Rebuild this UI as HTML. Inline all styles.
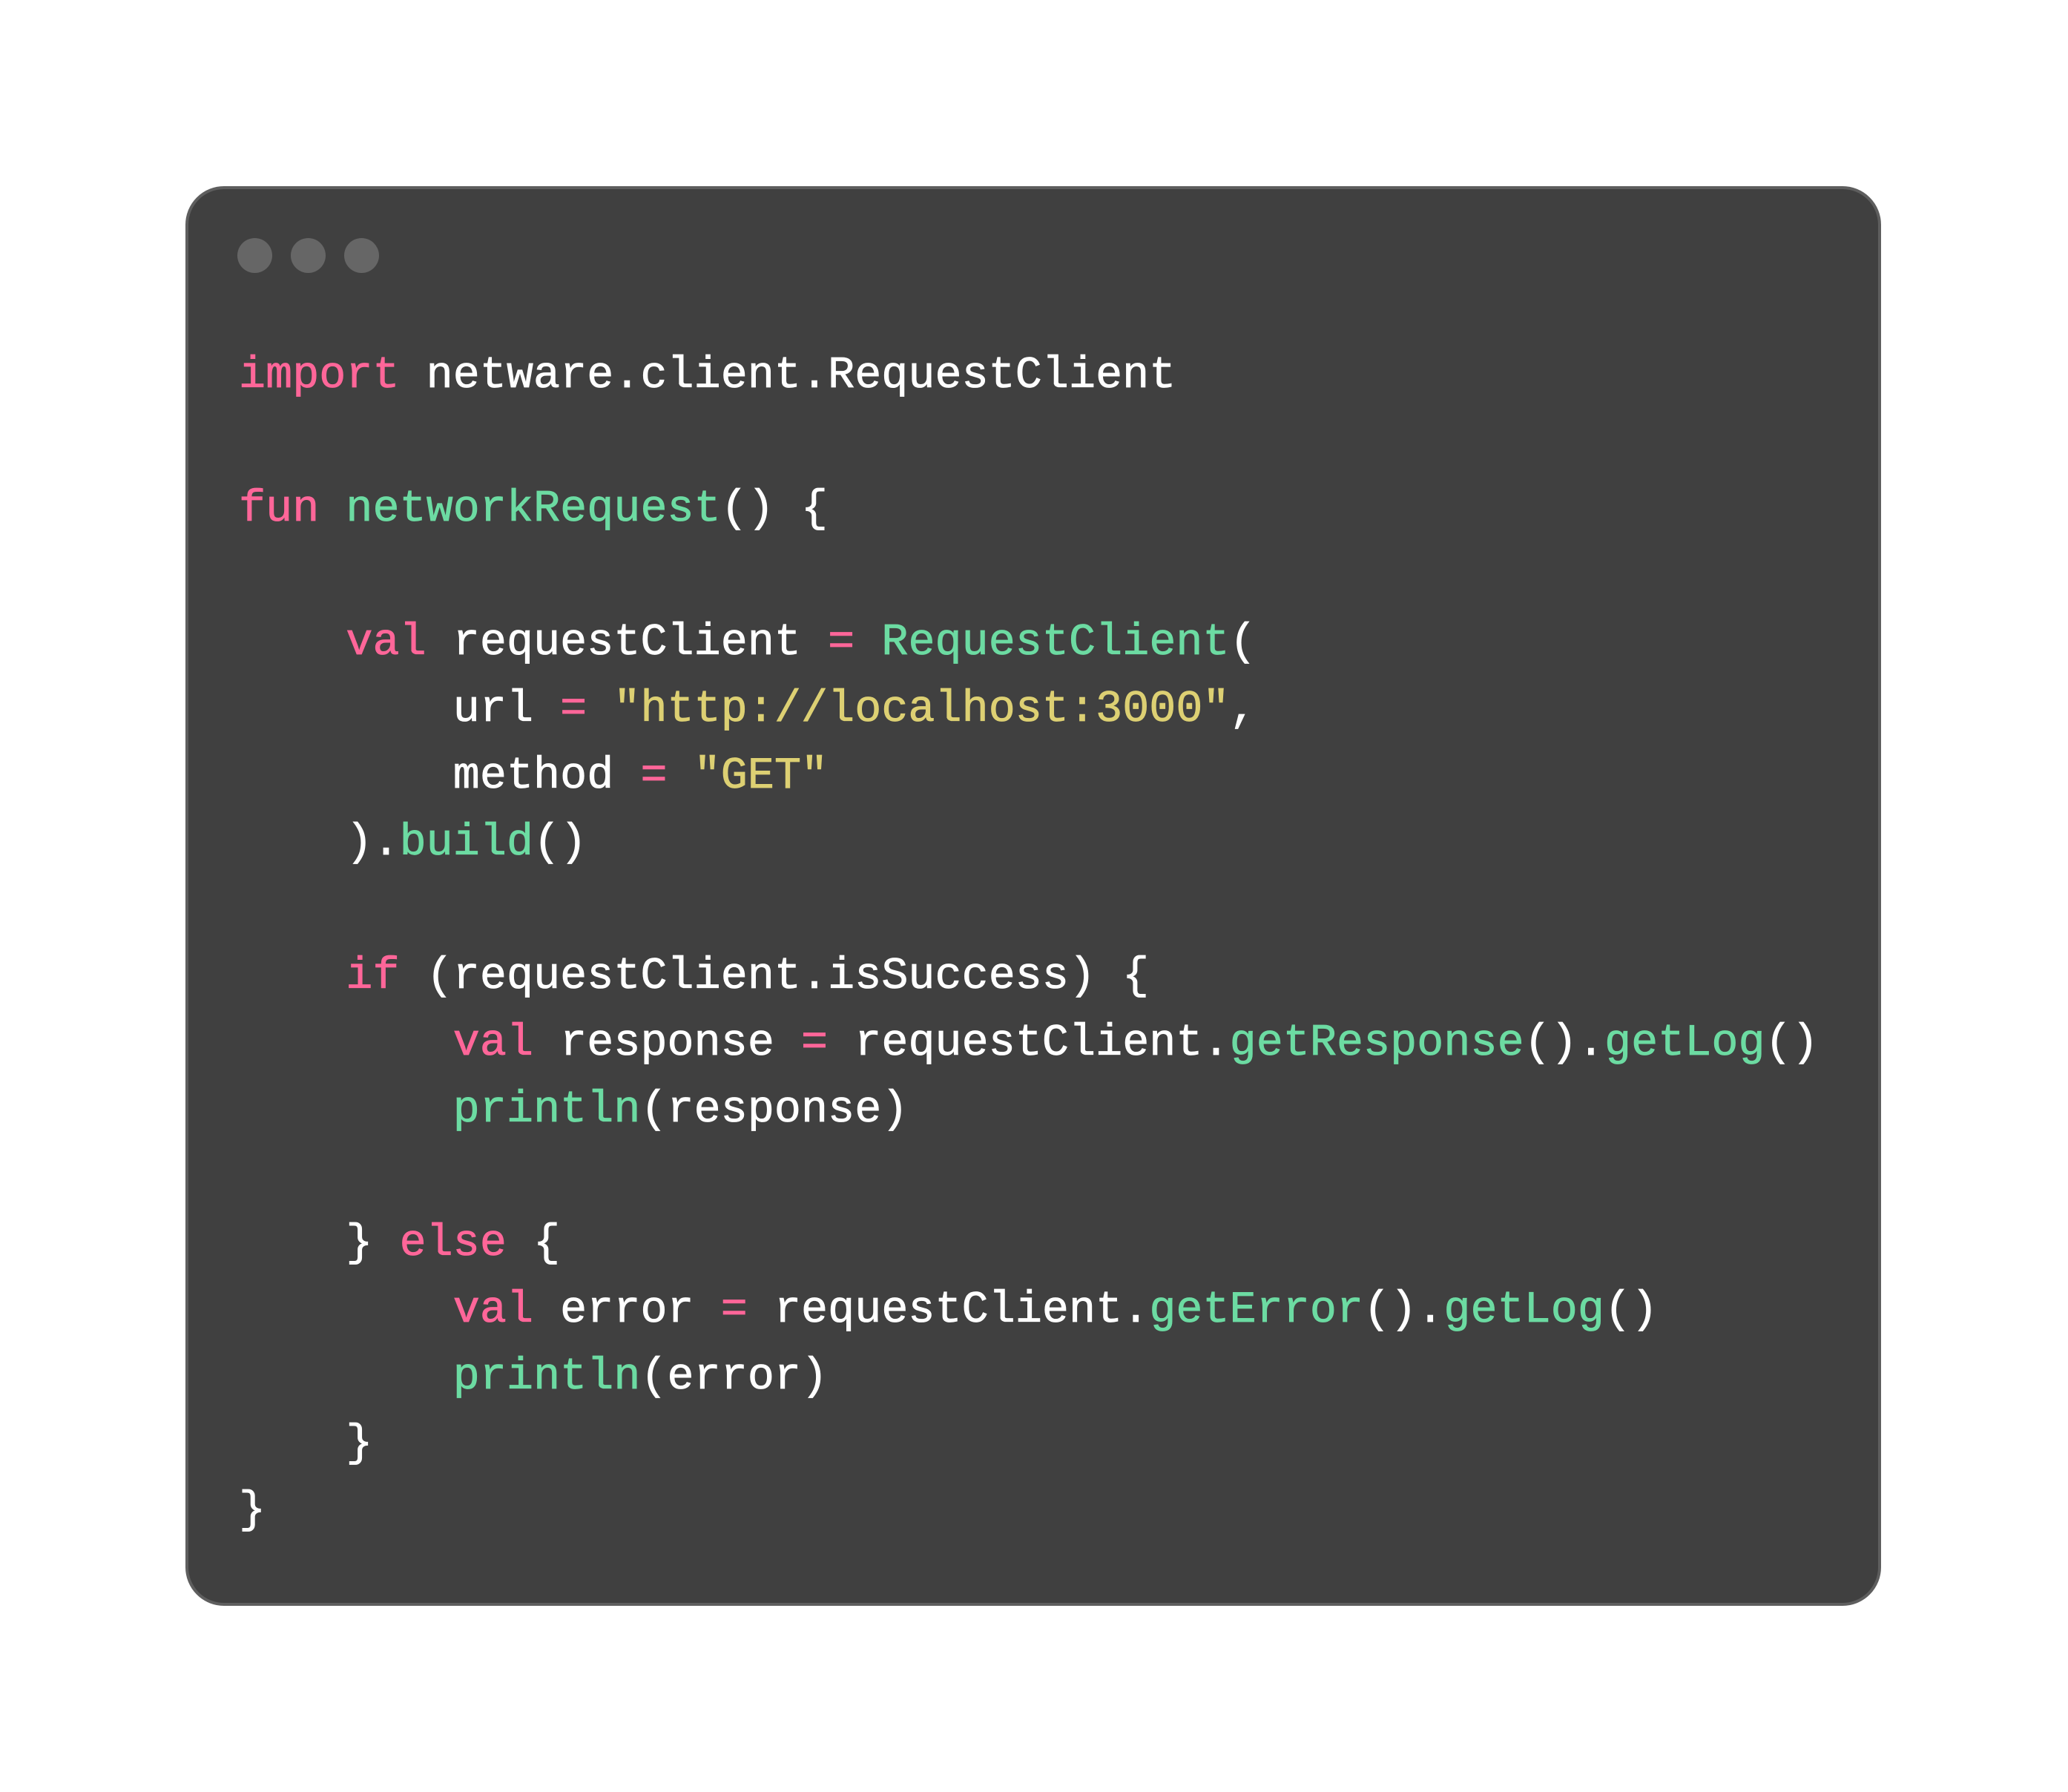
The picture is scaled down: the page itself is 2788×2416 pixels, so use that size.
<!DOCTYPE html>
<html><head><meta charset="utf-8"><style>
html,body{margin:0;padding:0;background:#fff;width:2788px;height:2416px;overflow:hidden}
.win{position:absolute;left:250px;top:251px;width:2278px;height:1906px;background:#404040;border:4px solid #5e5e5e;border-radius:52px}
.dot{position:absolute;top:321px;width:47px;height:47px;border-radius:50%;background:#666}
pre{position:absolute;left:322px;top:462px;margin:0;font-family:"Liberation Mono",monospace;font-size:60px;line-height:90px;color:#fff;letter-spacing:0.09px;-webkit-text-stroke:0.8px currentColor}
.k{color:#ff6699}.f{color:#6cdba2}.s{color:#ddd073}
</style></head><body>
<div class="win"></div>
<div class="dot" style="left:320px"></div>
<div class="dot" style="left:392px"></div>
<div class="dot" style="left:464px"></div>
<pre><span class="k">import</span> netware.client.RequestClient

<span class="k">fun</span> <span class="f">networkRequest</span>() {

    <span class="k">val</span> requestClient <span class="k">=</span> <span class="f">RequestClient</span>(
        url <span class="k">=</span> <span class="s">"http://localhost:3000"</span>,
        method <span class="k">=</span> <span class="s">"GET"</span>
    ).<span class="f">build</span>()

    <span class="k">if</span> (requestClient.isSuccess) {
        <span class="k">val</span> response <span class="k">=</span> requestClient.<span class="f">getResponse</span>().<span class="f">getLog</span>()
        <span class="f">println</span>(response)

    } <span class="k">else</span> {
        <span class="k">val</span> error <span class="k">=</span> requestClient.<span class="f">getError</span>().<span class="f">getLog</span>()
        <span class="f">println</span>(error)
    }
}</pre>
</body></html>
